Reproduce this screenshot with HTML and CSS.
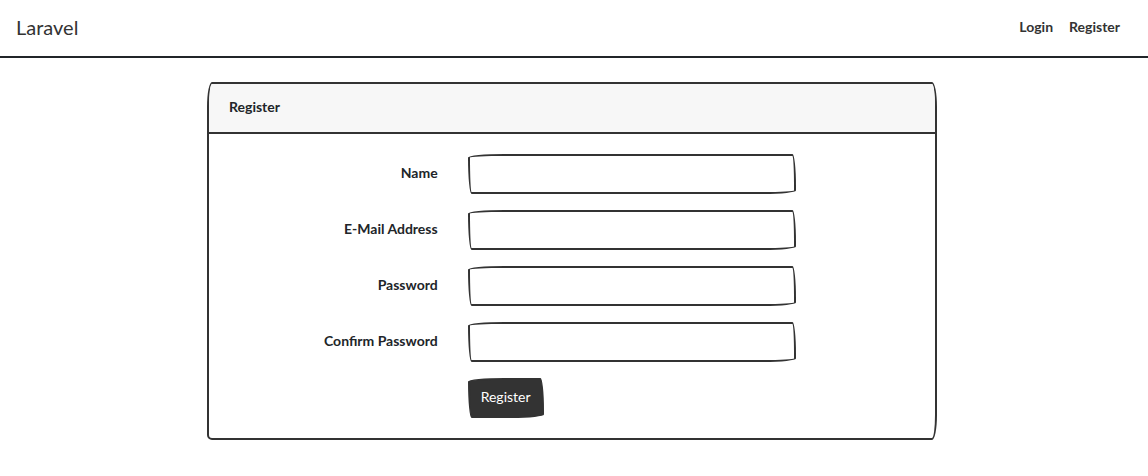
FILE: index.html
```html
<!DOCTYPE html>
<html lang="en">
<head>
<meta charset="utf-8">
<meta name="viewport" content="width=device-width, initial-scale=1">
<title>Laravel</title>
<link rel="stylesheet" href="styles.css">
</head>
<body>
<header class="navbar">
  <a class="brand" href="#">Laravel</a>
  <nav class="nav-links">
    <a class="nav-link" href="#">Login</a>
    <a class="nav-link" href="#">Register</a>
  </nav>
</header>
<main class="main">
  <section class="card">
    <h1 class="card-header">Register</h1>
    <form class="card-body">
      <div class="row">
        <label class="label" for="name">Name</label>
        <div class="field"><input class="input" id="name" type="text"></div>
      </div>
      <div class="row">
        <label class="label" for="email">E-Mail Address</label>
        <div class="field"><input class="input" id="email" type="email"></div>
      </div>
      <div class="row">
        <label class="label" for="password">Password</label>
        <div class="field"><input class="input" id="password" type="password"></div>
      </div>
      <div class="row">
        <label class="label" for="confirm">Confirm Password</label>
        <div class="field"><input class="input" id="confirm" type="password"></div>
      </div>
      <div class="row">
        <div class="field field-offset"><button class="button" type="submit">Register</button></div>
      </div>
    </form>
  </section>
</main>
</body>
</html>
```
FILE: styles.css
```css
* { box-sizing: border-box; }

body {
  margin: 0;
  background: #fff;
  color: #212529;
  font: 700 14px/24px Lato, "Open Sans", sans-serif;
}

.navbar {
  display: flex;
  align-items: center;
  justify-content: space-between;
  padding: 12px 28px 14px 16px;
  border-bottom: 2px solid #212529;
}

.brand {
  color: #333;
  font-size: 20px;
  font-weight: 400;
  line-height: 30px;
  text-decoration: none;
}

.nav-links { display: flex; gap: 16px; }
.nav-link { color: #333; text-decoration: none; }

.main { padding: 24px 19px 24px 15px; }

.card {
  max-width: 730px;
  margin: 0 auto;
  overflow: hidden;
  border: 2px solid #333;
  border-radius: 5px / 25px 25px 25px 5px;
}

.card-header {
  margin: 0;
  padding: 11px 20px 13px;
  border-bottom: 2px solid #333;
  background: #f7f7f7;
  font-size: 14px;
  line-height: 24px;
}

.card-body {
  display: grid;
  gap: 16px;
  padding: 20px;
}

.row { display: flex; margin: 0 -15px; }

.label {
  flex: 0 0 33.3333%;
  padding: 7px 15px 9px;
  text-align: right;
}

.field { flex: 0 0 50%; padding: 0 15px; }
.field-offset { margin-left: 33.3333%; }

.input,
.button {
  display: block;
  height: 40px;
  border: 2px solid #333;
  border-radius: 255px 25px 225px 25px / 25px 225px 25px 255px;
  font: inherit;
}

.input {
  width: 100%;
  padding: 6px 12px;
  background: #fff;
  color: #333;
}

.button {
  padding: 5px 11px 7px;
  background: #333;
  color: #fff;
  font-weight: 400;
}
```
